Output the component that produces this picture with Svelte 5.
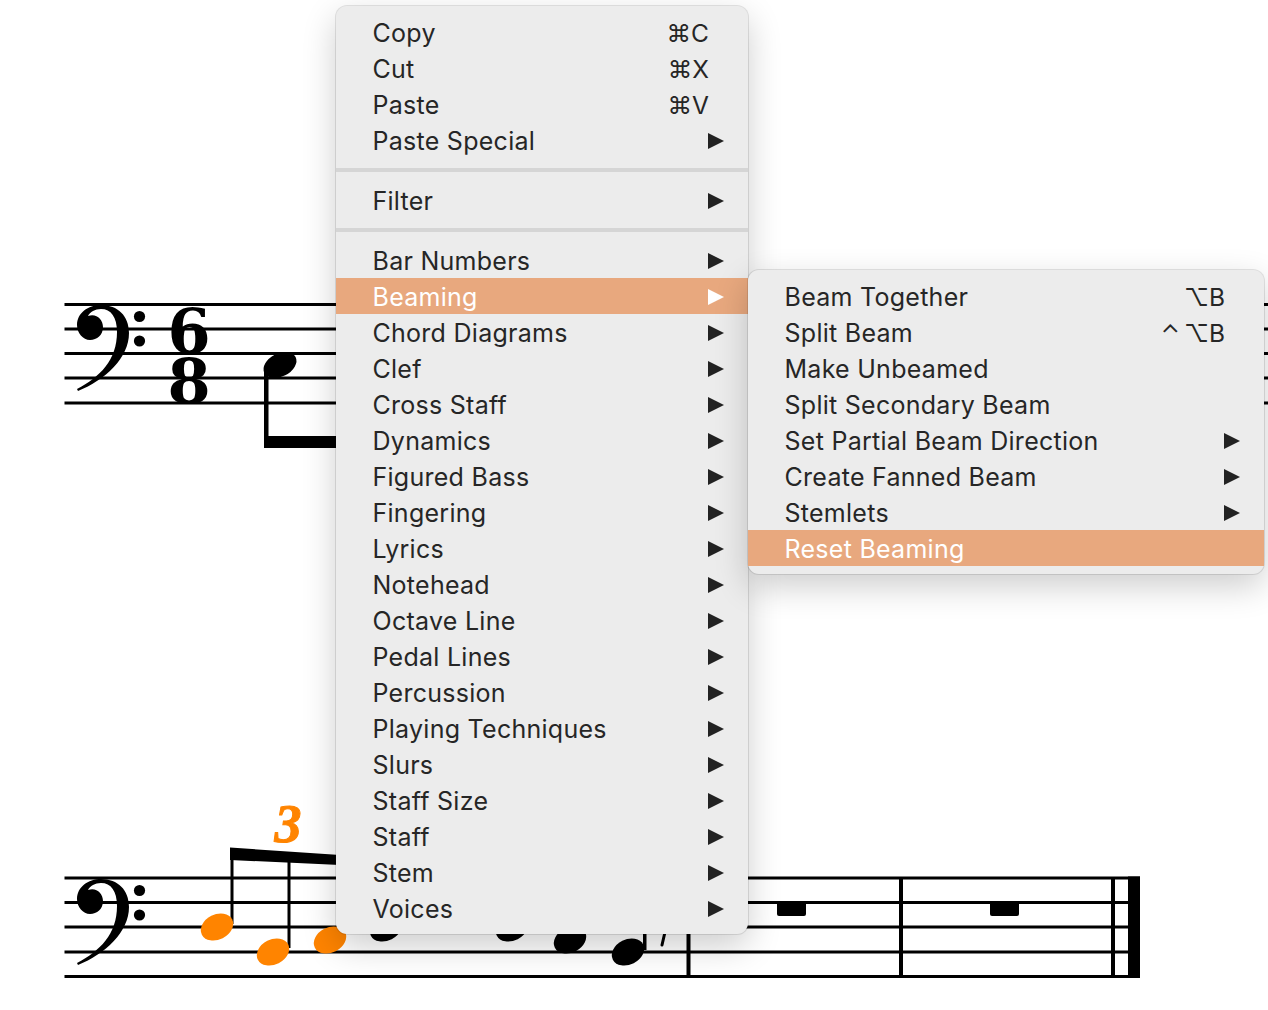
<script>
	const staffTop = [304.5, 329, 353.5, 378, 403];
	const staffBottom = [878, 902.5, 927, 952, 976.5];

	const clef =
		'M77 389C100 377 117 360 117 332C117 317 111 309 101 309C95 309 90 312 88 316C96 313 103 319 103 327C103 335 97 340 90 340C83 340 77 333 77 325C77 313 88 305 101 305C118 305 129 316 129 333C129 358 105 380 78 391Z';

	const orangeNotes = [
		[217, 927],
		[273, 952],
		[330, 940]
	];
	const blackNotes = [
		[386, 928],
		[512, 928],
		[570, 940],
		[628, 952]
	];

	const top = [
		{ label: 'Copy', keys: '⌘C' },
		{ label: 'Cut', keys: '⌘X' },
		{ label: 'Paste', keys: '⌘V' },
		{ label: 'Paste Special', more: true }
	];
	const names = [
		'Bar Numbers',
		'Beaming',
		'Chord Diagrams',
		'Clef',
		'Cross Staff',
		'Dynamics',
		'Figured Bass',
		'Fingering',
		'Lyrics',
		'Notehead',
		'Octave Line',
		'Pedal Lines',
		'Percussion',
		'Playing Techniques',
		'Slurs',
		'Staff Size',
		'Staff',
		'Stem',
		'Voices'
	];
	const properties = names.map((label) => ({ label, more: true, active: label === 'Beaming' }));
	const beaming = [
		{ label: 'Beam Together', keys: '⌥B' },
		{ label: 'Split Beam', ctrl: true, keys: '⌥B' },
		{ label: 'Make Unbeamed' },
		{ label: 'Split Secondary Beam' },
		{ label: 'Set Partial Beam Direction', more: true },
		{ label: 'Create Fanned Beam', more: true },
		{ label: 'Stemlets', more: true },
		{ label: 'Reset Beaming', active: true }
	];
</script>

{#snippet row(item)}
	<div class="row" class:active={item.active}>
		<span class="label">{item.label}</span>
		{#if item.keys}<span class="keys">{#if item.ctrl}<span class="ctrl">⌃</span>{/if}{item.keys}</span>{/if}
		{#if item.more}<span class="arrow"></span>{/if}
	</div>
{/snippet}

<div class="page">
	<svg class="score" width="1268" height="1010" viewBox="0 0 1268 1010">
		{#each staffTop as y}
			<line x1="64.5" x2="1268" y1={y} y2={y} class="staff" />
		{/each}
		{#each staffBottom as y}
			<line x1="64.5" x2="1140" y1={y} y2={y} class="staff" />
		{/each}

		<path d={clef} />
		<circle cx="139.5" cy="316.5" r="5.6" />
		<circle cx="139.5" cy="341" r="5.6" />
		<text class="time" x="189" y="353">6</text>
		<text class="time" x="189" y="403">8</text>

		<ellipse cx="280" cy="365" rx="17.5" ry="11.5" transform="rotate(-27 280 365)" />
		<rect x="264" y="368" width="4.5" height="80" />
		<rect x="264" y="436" width="80" height="12" />

		<g transform="translate(0 574)">
			<path d={clef} />
			<circle cx="139.5" cy="316.5" r="5.6" />
			<circle cx="139.5" cy="341" r="5.6" />
		</g>

		<polygon points="230,847.5 340,855 340,865 230,860" />
		<rect x="230.5" y="850" width="3" height="74" />
		<rect x="287.5" y="856" width="3" height="92" />
		{#each orangeNotes as [x, y]}
			<ellipse cx={x} cy={y} rx="17" ry="12.5" transform="rotate(-27 {x} {y})" fill="#ff8400" />
		{/each}
		<text class="tuplet" x="288" y="842">3</text>

		{#each blackNotes as [x, y]}
			<ellipse cx={x} cy={y} rx="17" ry="12.5" transform="rotate(-27 {x} {y})" />
		{/each}
		<rect x="643" y="920" width="3.5" height="30" />
		<line x1="665" y1="932" x2="662" y2="945" stroke="#000" stroke-width="3" stroke-linecap="round" />

		<rect x="777" y="902" width="29" height="14" rx="2" />
		<rect x="990" y="902" width="29" height="14" rx="2" />
		<rect x="686.5" y="878" width="4" height="100" />
		<rect x="899" y="878" width="4" height="100" />
		<rect x="1111" y="878" width="4" height="100" />
		<rect x="1128" y="876.5" width="12" height="101" />
	</svg>

	<div class="menu main">
		{#each top as item}{@render row(item)}{/each}
		<div class="separator"></div>
		{@render row({ label: 'Filter', more: true })}
		<div class="separator"></div>
		{#each properties as item}{@render row(item)}{/each}
	</div>

	<div class="menu sub">
		{#each beaming as item}{@render row(item)}{/each}
	</div>
</div>

<style>
	:global(body) {
		background: #fff;
	}

	.page {
		position: relative;
		width: 1268px;
		height: 1010px;
		overflow: hidden;
		background: #fff;
	}

	.score {
		position: absolute;
		inset: 0;
	}

	.staff {
		stroke: #000;
		stroke-width: 3;
	}

	.time {
		font-family: 'DejaVu Serif', serif;
		font-weight: 700;
		font-size: 62px;
		text-anchor: middle;
	}

	.tuplet {
		font-family: 'Liberation Serif', serif;
		font-weight: 700;
		font-style: italic;
		font-size: 54px;
		text-anchor: middle;
		fill: #ff8400;
		stroke: #ff8400;
		stroke-width: 1;
	}

	.menu {
		position: absolute;
		box-sizing: border-box;
		background: #ececec;
		border-radius: 11px;
		padding: 8px 0;
		box-shadow:
			0 0 0 1px rgba(0, 0, 0, 0.1),
			0 12px 34px rgba(0, 0, 0, 0.2);
		font-family: Inter, 'Noto Sans', sans-serif;
		font-size: 25px;
		letter-spacing: 0.27px;
		color: #262626;
	}

	.main {
		left: 336px;
		top: 6px;
		width: 412px;
		height: 928px;
	}

	.sub {
		left: 748px;
		top: 270px;
		width: 516px;
		height: 304px;
	}

	.row {
		display: flex;
		align-items: center;
		height: 36px;
		padding: 1px 24px 0 36.5px;
		box-sizing: border-box;
		white-space: nowrap;
	}

	.row.active {
		background: #e8a87e;
		color: #fff;
	}

	.label {
		flex: 1;
	}

	.keys {
		margin-right: 15px;
		letter-spacing: 0;
		font-family: Inter, 'DejaVu Sans', sans-serif;
		font-size: 24.5px;
	}

	.ctrl {
		margin-right: 4px;
	}

	.arrow {
		width: 0;
		height: 0;
		border-left: 16px solid #222;
		border-top: 8px solid transparent;
		border-bottom: 8px solid transparent;
	}

	.active .arrow {
		border-left-color: #fff;
	}

	.separator {
		height: 4px;
		margin: 10px 0;
		background: #d5d5d5;
	}
</style>
